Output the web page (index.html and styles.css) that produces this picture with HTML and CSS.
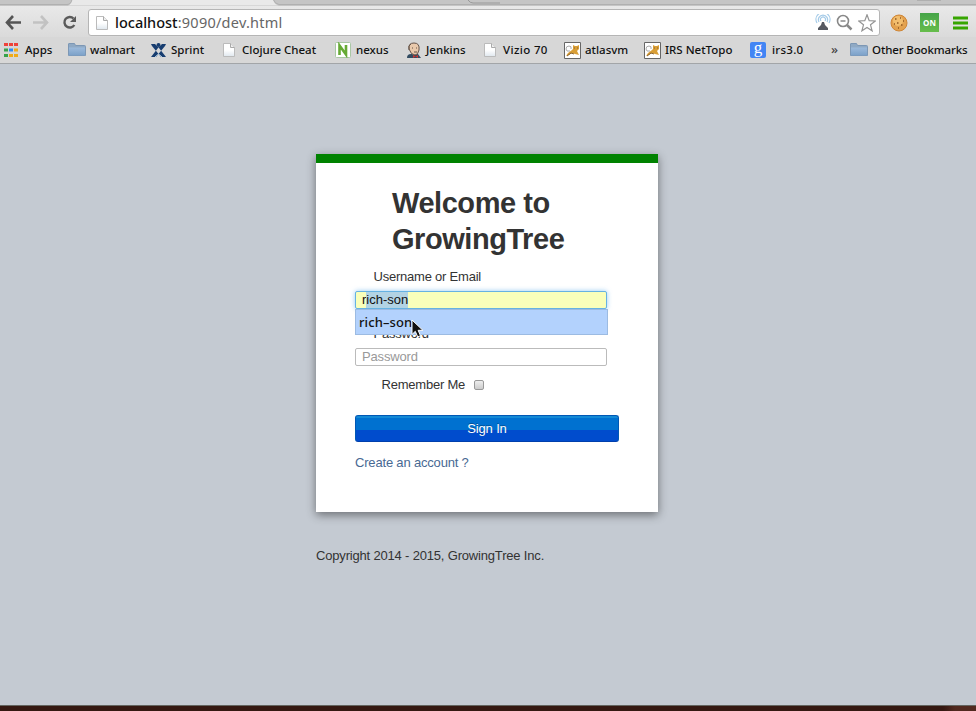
FILE: index.html
```html
<!DOCTYPE html>
<html lang="en">
<head>
<meta charset="utf-8">
<title>GrowingTree</title>
<link rel="stylesheet" href="styles.css">
</head>
<body>
<svg class="defs" width="0" height="0" aria-hidden="true">
  <defs>
    <linearGradient id="folderFill" x2="0" y2="1"><stop stop-color="#9dbbdc"/><stop offset="1" stop-color="#7ba0c8"/></linearGradient>
    <linearGradient id="pageFill" x2="0" y2="1"><stop offset=".5" stop-color="#fff"/><stop offset="1" stop-color="#dfe7ee"/></linearGradient>
    <symbol id="folder" viewBox="0 0 18 16"><path d="M.5 13.5V2Q.5 1.500 1 1.500h5.500l1 2h9q1 0 1 1v9z" fill="#8fa9c4" stroke="#7c97b5"/><path d="M1 5.500h16v8H1z" fill="url(#folderFill)"/></symbol>
    <symbol id="page" viewBox="0 0 12 16"><path d="M.5 1.500h7l4 4v9H.5z" fill="url(#pageFill)" stroke="#bbb"/><path d="M7.500 1.500v4h4" fill="#eee" stroke="#aaa"/></symbol>
    <symbol id="cat" viewBox="0 0 17 17"><path d="M.5.5h16v16H.5z" fill="#fff" stroke="#666"/><path d="M6 9Q2 10 2 7t3-3q3 0 2 3" fill="none" stroke="#aaa"/><path d="M2 14l2-3 4-3 1-1V3l2 1h2l2-1v4l-2 2 2 4-4-1-3-1-3 2z" fill="#d99e35"/><path d="M3 14l4-3 3 1M10 6h1m2 0h1" fill="none" stroke="#8a6330"/></symbol>
  </defs>
</svg>
<header class="browser">
  <div class="tabs"><svg width="976" height="6" viewBox="0 0 976 6"><path d="M0 0h976v6H0z" fill="#c5c5c5"/><path d="M68 5.500q3-1 4-5.500h201q2 5 6 5.500z" fill="#e9e9e9"/><path d="M0 4.500h67q4 0 5-5M273-1q2 5 6 5.500h697" fill="none" stroke="#b0b0b0"/><path d="M468 0q2 3 5 3h27M917 0h24" fill="none" stroke="#999"/></svg></div>
  <div class="toolbar">
    <svg class="arrow" width="17" height="15" viewBox="0 0 17 15"><path d="M8 1L2 7.500 8 14M2 7.500h14" fill="none" stroke="#555" stroke-width="2.600"/></svg>
    <svg class="arrow forward" width="17" height="15" viewBox="0 0 17 15"><path d="M9 1l6 6.500L9 14M15 7.500H1" fill="none" stroke="#c2c2c2" stroke-width="2.600"/></svg>
    <svg class="reload" width="15" height="15" viewBox="0 0 15 15"><path d="M11.500 3.500A5.300 5.300 0 1 0 12.300 10" fill="none" stroke="#5a5a5a" stroke-width="2.400"/><path d="M14 1v6H8z" fill="#5a5a5a"/></svg>
    <div class="address">
      <svg class="site" width="12" height="16"><use href="#page"/></svg>
      <span class="url"><b>localhost</b>:9090/dev.html</span>
      <svg class="antenna" width="16" height="17" viewBox="0 0 16 17"><path d="M2 9a7 7 0 1 1 12 0M4 8a4.600 4.600 0 1 1 8 0M6 7a2.500 2.500 0 1 1 4 0" fill="none" stroke="#a5cbe8" stroke-width="1.200"/><path d="M7 8h2l1 3 3 3v2H3v-2l3-3z" fill="#555962"/></svg>
      <svg class="lens" width="17" height="17" viewBox="0 0 17 17"><circle cx="7" cy="7" r="5.500" fill="none" stroke="#888" stroke-width="1.600"/><path d="M4.500 7h5" stroke="#888" stroke-width="1.500"/><path d="M11 11l4.500 4.500" stroke="#888" stroke-width="2.500"/></svg>
      <svg class="star" width="18" height="18" viewBox="0 0 18 18"><path d="M9 .8l2.200 5.900 6.100.3-4.800 3.800 1.600 6L9 13.400l-5.100 3.400 1.600-6L.7 7l6.100-.3z" fill="#fff" stroke="#949494" stroke-width="1.200"/></svg>
    </div>
    <svg class="cookie" width="18" height="18" viewBox="0 0 18 18"><circle cx="9" cy="9" r="8" fill="#e3a24f" stroke="#cf8636"/><circle cx="8" cy="7" r="5" fill="#f2be6e"/><path d="M5 5h1.500M10 4h1M13 7h1M7 9h1.500M4 10h1M11 11h1.500M8 14h1" stroke="#8f5722" stroke-width="1.500"/></svg>
    <span class="on">ON</span>
    <svg class="menu" width="15" height="14" viewBox="0 0 15 14"><path d="M0 2h15M0 7h15M0 12h15" stroke="#36a500" stroke-width="3"/></svg>
  </div>
  <nav class="bookmarks">
    <a class="mark apps"><svg width="14" height="14" viewBox="0 0 14 14"><path d="M0 1.500h14" stroke="#ee4239" stroke-width="3" stroke-dasharray="4 1"/><path d="M0 7h4M0 12.500h4" stroke="#37a34a" stroke-width="3"/><path d="M5 7h4" stroke="#318af3" stroke-width="3"/><path d="M10 7h4M5 12.500h4M10 12.500h4" stroke="#f0ab19" stroke-width="3"/></svg><span>Apps</span></a>
    <a class="mark walmart"><svg width="18" height="16"><use href="#folder"/></svg><span>walmart</span></a>
    <a class="mark sprint"><svg width="17" height="15" viewBox="0 0 17 15"><path d="M1 1h4l4 4 7 9h-5L2 3zM16 1h-4L8 5 1 14h5l9-11z" fill="#173d70"/><circle cx="8.500" cy="2" r="2" fill="#173d70"/><path d="M5 14l3.500-3 3.500 3" fill="none" stroke="#b6cee2"/></svg><span>Sprint</span></a>
    <a class="mark clojure"><svg width="12" height="16"><use href="#page"/></svg><span>Clojure Cheat</span></a>
    <a class="mark nexus"><svg width="16" height="16" viewBox="0 0 16 16"><rect x=".5" y=".5" width="15" height="15" rx="1" fill="#fff" stroke="#a9c7a4"/><path d="M4.500 13V3.500l6.500 9V3" fill="none" stroke="#66aa35" stroke-width="2.600"/></svg><span>nexus</span></a>
    <a class="mark jenkins"><svg width="16" height="17" viewBox="0 0 16 17"><path d="M1 16q0-4 4-4h7l3 4z" fill="#334c61"/><path d="M3 7q-1-6 5-6 6 0 5 7-1 5-4 5-4 0-6-6z" fill="#e9c9ac" stroke="#655349"/><path d="M3 8V4l2-2M6 6h1m3 0h1M8 10h3" fill="none" stroke="#665447"/><path d="M7 13l5 3v-3l-5 3z" fill="#cc3530"/></svg><span>Jenkins</span></a>
    <a class="mark vizio"><svg width="12" height="16"><use href="#page"/></svg><span>Vizio 70</span></a>
    <a class="mark atlas"><svg width="17" height="17"><use href="#cat"/></svg><span>atlasvm</span></a>
    <a class="mark topo"><svg width="17" height="17"><use href="#cat"/></svg><span>IRS NetTopo</span></a>
    <a class="mark irs"><i class="google">g</i><span>irs3.0</span></a>
    <span class="more">»</span>
    <a class="mark other"><svg width="18" height="16"><use href="#folder"/></svg><span>Other Bookmarks</span></a>
  </nav>
</header>
<main class="page">
  <form class="card">
    <h1>Welcome to GrowingTree</h1>
    <label class="label" for="user">Username or Email</label>
    <div class="user-wrap">
      <div class="field active" id="user">r<span class="selected">ich-son</span></div>
      <div class="suggestion">rich–son</div>
      <svg class="cursor" width="14" height="20" viewBox="0 0 14 20"><path d="M1 1v14.500l3.300-3.200 2.400 5.600 2.800-1.200-2.400-5.400h4.800z" fill="#111" stroke="#fff"/></svg>
    </div>
    <label class="label password-label" for="password">Password</label>
    <input class="field password" id="password" type="password" placeholder="Password">
    <label class="remember">Remember Me <input type="checkbox"></label>
    <button class="submit" type="button">Sign In</button>
    <a class="create">Create an account ?</a>
  </form>
  <footer class="copyright">Copyright 2014 - 2015, GrowingTree Inc.</footer>
</main>
<div class="desktop"></div>
</body>
</html>
```
FILE: styles.css
```css
* { box-sizing: border-box; }
body { margin: 0; width: 976px; height: 711px; overflow: hidden; background: #c4cad2; color: #333; font: 13px/18px "Liberation Sans", Arial, sans-serif; display: flex; flex-direction: column; }
svg { display: block; flex: none; }
.defs { position: absolute; }
.browser { height: 64px; flex: none; background: #d7d7d7; border-bottom: 1px solid #a2a5a8; font-family: "Noto Sans", sans-serif; }
.tabs { height: 6px; }
.toolbar { height: 31px; display: flex; align-items: center; padding: 0 8px 0 5px; background: linear-gradient(#e9e9e9, #dadada); }
.arrow { margin-top: 2px; }
.forward { margin-left: 10px; }
.reload { margin-left: 13px; margin-top: 2px; }
.address { width: 792px; height: 27px; margin: 2px 0 0 11px; padding-left: 7px; display: flex; align-items: center; background: #fff; border: 1px solid #b5b5b5; border-radius: 3px; }
.url { width: 700px; margin-left: 7px; color: #666; font-size: 14.5px; line-height: 22px; margin-bottom: 2px; letter-spacing: .25px; }
.url b { color: #111; font-weight: 500; letter-spacing: 0; }
.lens { margin-left: 5px; }
.star { margin-left: 5px; }
.cookie { margin: 2px 0 0 10px; }
.on { width: 19px; height: 19px; margin: 2px 0 0 12px; background: linear-gradient(#45a448, #67bd4c); color: #fff; font: bold 8px/19px "Open Sans", sans-serif; text-align: center; }
.menu { margin: 2px 0 0 14px; }
.bookmarks { display: grid; grid-template-columns: 64px 82px 73px 112px 71px 78px 80px 80px 106px 81px 19px 1fr; height: 26px; padding-left: 4px; align-items: center; color: #111; font-size: 11.5px; font-weight: 500; line-height: 24px; white-space: nowrap; }
.mark { display: flex; align-items: center; }
.mark > span { margin-left: 4px; }
.apps > span { margin-left: 7px; }
.walmart > span, .other > span { letter-spacing: -.13px; }
.clojure > span, .vizio > span { margin-left: 7px; }
.vizio > span { letter-spacing: .35px; }
.nexus > span { margin-left: 5px; }
.irs > span { margin-left: 6px; letter-spacing: .25px; }
.google { width: 16px; height: 16px; background: #4285f4; border-radius: 2px; color: #fff; font: 17px/12px "Liberation Serif", serif; text-align: center; }
.more { color: #444; font-size: 13px; line-height: 20px; margin-bottom: 2px; }
.page { flex: 1; padding: 90px 0 0 316px; letter-spacing: -.18px; }
.card { width: 342px; height: 358px; padding: 22px 39px 0; background: #fff; border-top: 9px solid #008200; box-shadow: 0 3px 9px rgba(0, 0, 0, .45); }
h1 { width: 190px; margin: 0 0 11px 37px; font-size: 29px; line-height: 36px; letter-spacing: -.45px; }
.label { display: block; margin-left: 18.5px; letter-spacing: -.22px; }
.user-wrap { position: relative; margin-top: 5px; }
.field { display: block; width: 252px; height: 18px; padding: 0 6px; border: 1px solid #bbb; border-radius: 2px; font: 13px/16px "Liberation Sans", Arial, sans-serif; letter-spacing: -.15px; }
.active { color: #111; background: #f9ffba; border-color: #66b2e2; box-shadow: 0 0 5px rgba(82, 168, 236, .6); letter-spacing: 0; }
.selected { display: inline-block; height: 16px; background: #b2d3e4; }
.suggestion { position: absolute; top: 18px; left: 0; width: 253px; height: 26px; padding-left: 3px; color: #111; background: #b3d2fd; border: 1px solid #9cbbe2; font: 500 13px/24px "Noto Sans", sans-serif; letter-spacing: .1px; }
.cursor { position: absolute; left: 56px; top: 28px; }
.password-label { margin-top: 16px; }
.password { margin-top: 5px; padding-bottom: 1px; }
.password::placeholder { color: #999; opacity: 1; }
.remember { display: flex; align-items: center; margin: 10px 0 0 26.5px; letter-spacing: -.22px; }
.remember input { appearance: none; width: 10px; height: 10px; margin: 0 0 0 9px; border: 1px solid #999; border-radius: 2px; background: linear-gradient(#eee, #ccc); }
.submit { display: block; width: 264px; height: 27px; margin: 21px 0 12px; padding: 0; border: 1px solid #0058b5; border-bottom-color: #003fac; border-radius: 3px; background: linear-gradient(#1389d5 0 2px, #0071d0 2px 14px, #004ccd 14px); color: #fff; font: 13px/25px "Liberation Sans", Arial, sans-serif; letter-spacing: -.15px; text-shadow: 0 -1px rgba(0, 0, 0, .3); }
.create { color: #486993; }
.copyright { margin-top: 35px; }
.desktop { height: 6px; flex: none; background: linear-gradient(90deg, #351811 0 943px, #51291f 955px); border-top: 1px solid #63645f; }
```
